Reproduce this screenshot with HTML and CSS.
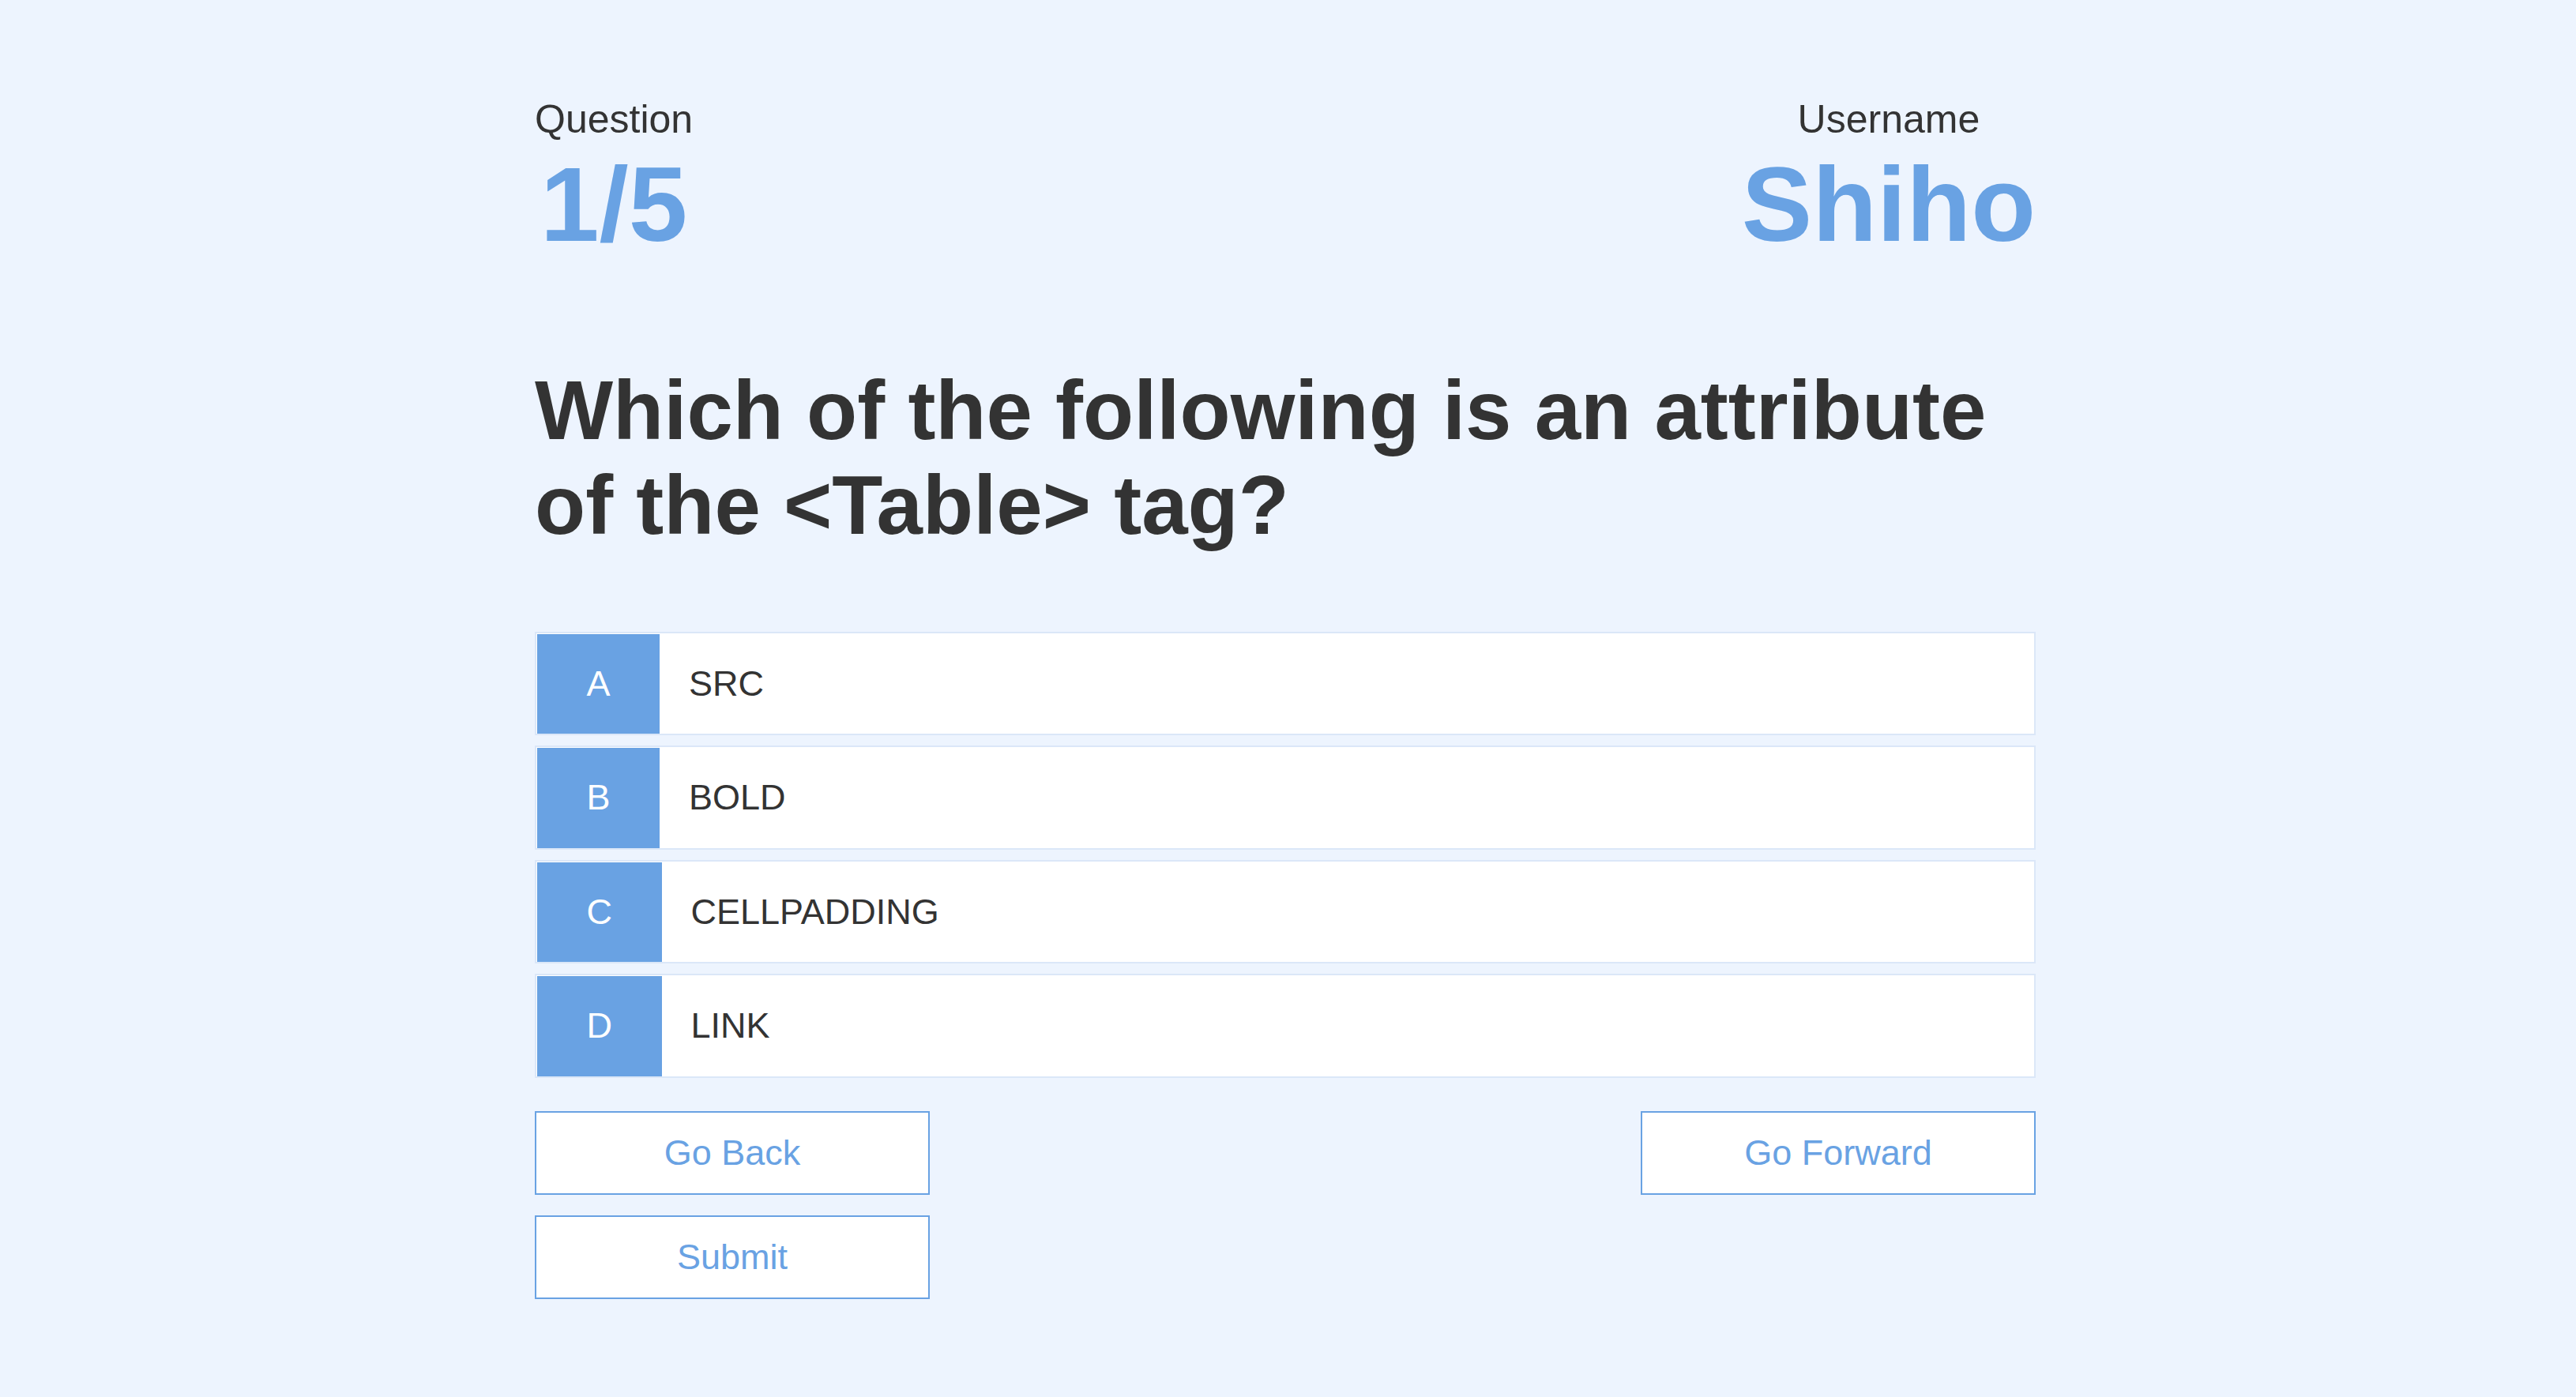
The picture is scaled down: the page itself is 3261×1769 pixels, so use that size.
FILE: index.html
```html
<!DOCTYPE html>
<html lang="en">
<head>
<meta charset="utf-8">
<title>Quiz</title>
<link rel="stylesheet" href="styles.css">
</head>
<body>
<main class="quiz">
  <header class="quiz-header">
    <div class="stat">
      <div class="stat-label">Question</div>
      <div class="stat-value">1/5</div>
    </div>
    <div class="stat">
      <div class="stat-label">Username</div>
      <div class="stat-value">Shiho</div>
    </div>
  </header>

  <h1 class="question">Which of the following is an attribute of the &lt;Table&gt; tag?</h1>

  <ul class="options">
    <li class="option"><span class="option-key">A</span><span class="option-text">SRC</span></li>
    <li class="option"><span class="option-key">B</span><span class="option-text">BOLD</span></li>
    <li class="option"><span class="option-key">C</span><span class="option-text">CELLPADDING</span></li>
    <li class="option"><span class="option-key">D</span><span class="option-text">LINK</span></li>
  </ul>

  <div class="actions">
    <div class="action-col">
      <button class="btn" type="button">Go Back</button>
      <button class="btn" type="button">Submit</button>
    </div>
    <button class="btn" type="button">Go Forward</button>
  </div>
</main>
</body>
</html>
```

FILE: styles.css
```css
* {
  box-sizing: border-box;
}

html, body {
  margin: 0;
  background: #edf4fe;
}

body {
  padding: 0 7px 0 0;
  font-family: "Liberation Sans", Arial, sans-serif;
  color: #333333;
}

.quiz {
  width: 1900px;
  margin: 0 auto;
  padding-top: 123px;
}

.quiz-header {
  display: flex;
  justify-content: space-between;
  align-items: flex-start;
}

.stat {
  text-align: center;
}

.stat-label {
  font-size: 50px;
  line-height: 57.5px;
  color: #333333;
}

.stat-value {
  font-size: 134px;
  line-height: 156px;
  font-weight: 700;
  color: #69a2e3;
}

.question {
  margin: 123px 0 100px;
  font-size: 105px;
  line-height: 120px;
  font-weight: 700;
  color: #333333;
}

.options {
  list-style: none;
  margin: 0;
  padding: 0;
  display: flex;
  flex-direction: column;
  gap: 13px;
}

.option {
  display: flex;
  height: 131.5px;
  padding: 1px 0 0 1px;
  background: #ffffff;
  border: 2px solid #dbe7f8;
}

.option-key {
  flex: 0 0 auto;
  display: flex;
  align-items: center;
  justify-content: center;
  padding: 0 62.5px;
  background: #69a2e3;
  color: #ffffff;
  font-size: 45px;
}

.option-text {
  display: flex;
  align-items: center;
  padding-left: 37px;
  font-size: 45px;
  color: #333333;
}

.actions {
  margin-top: 42px;
  display: flex;
  justify-content: space-between;
  align-items: flex-start;
}

.action-col {
  display: flex;
  flex-direction: column;
  gap: 26px;
}

.btn {
  width: 500px;
  height: 106px;
  padding: 0;
  background: #ffffff;
  border: 2px solid #69a2e3;
  border-radius: 0;
  color: #69a2e3;
  font-family: "Liberation Sans", Arial, sans-serif;
  font-size: 45px;
  cursor: pointer;
}
```
